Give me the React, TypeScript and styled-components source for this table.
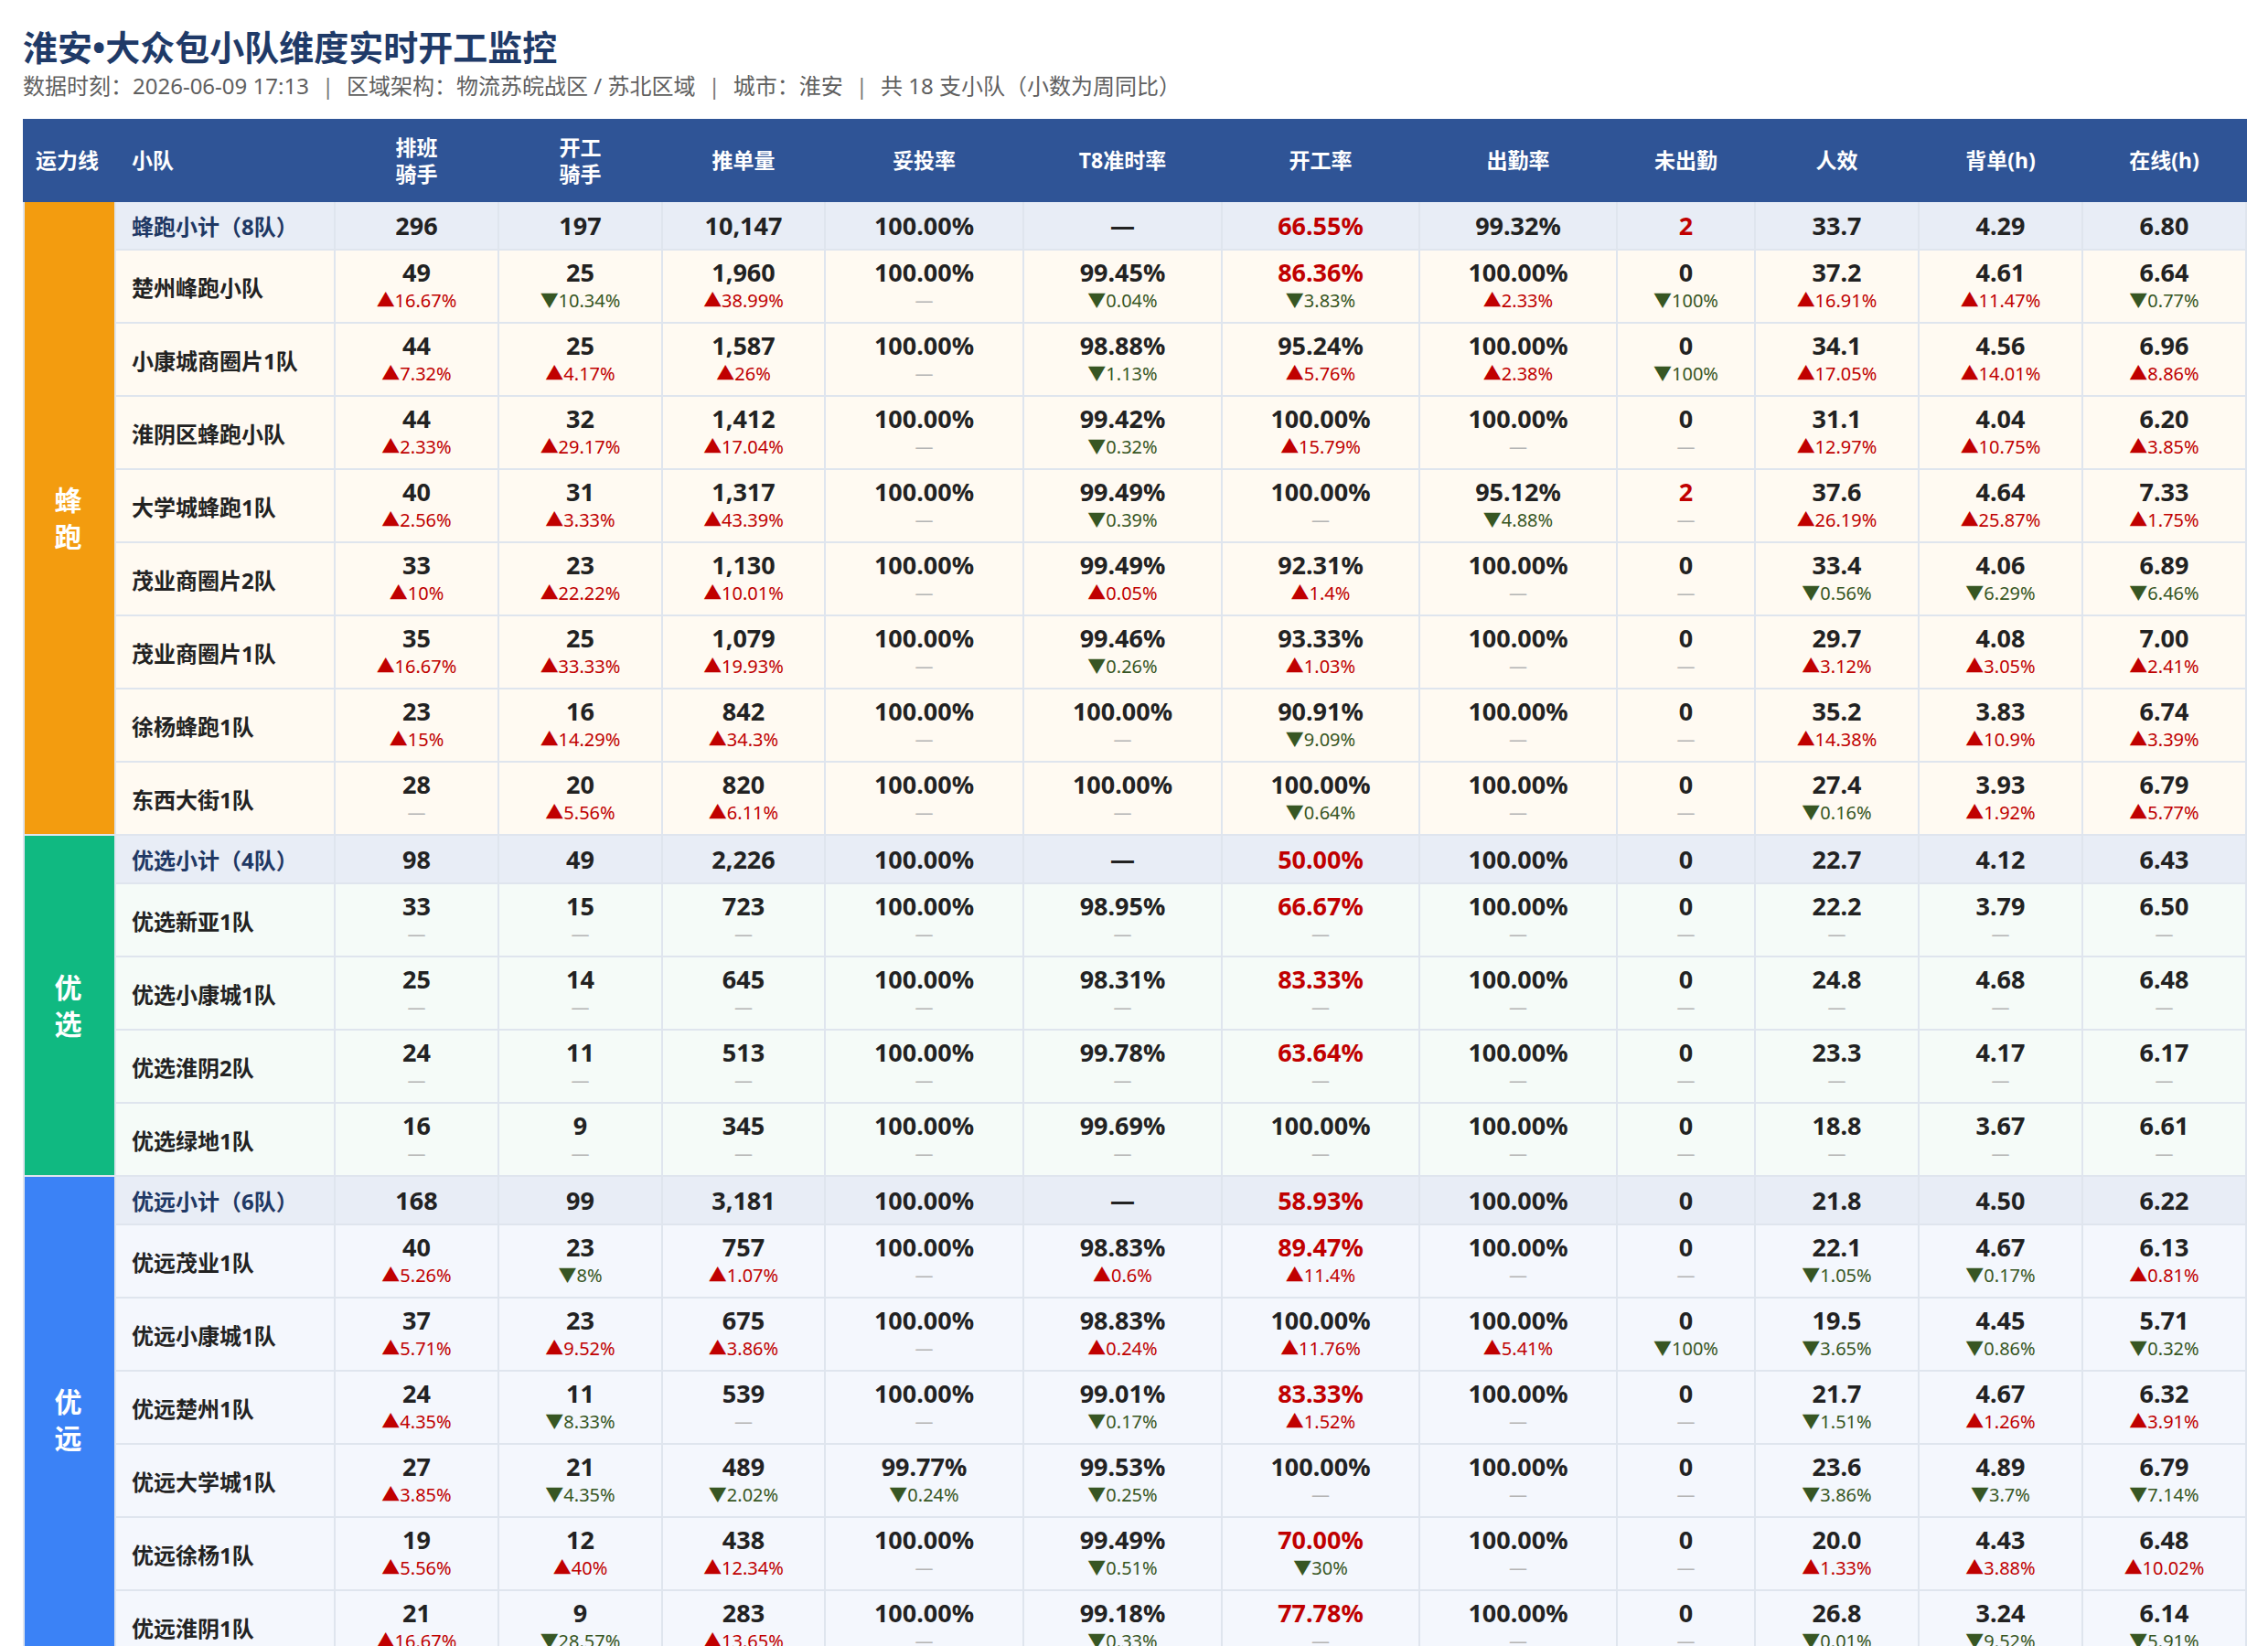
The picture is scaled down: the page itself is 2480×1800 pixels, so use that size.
import React from 'react';
import styled, { createGlobalStyle } from 'styled-components';

const GlobalStyle = createGlobalStyle`
    html, body {
        margin: 0;
        padding: 0;
        background: #ffffff;
    }
    body {
        font-family: "Noto Sans", "Noto Sans CJK SC", sans-serif;
        color: #222222;
    }
`;

type Tone = 'fengpao' | 'youxuan' | 'youyuan';

interface Column {
    label: string[];
    width: number;
    alert?: (value: string) => boolean;
}

const columns: Column[] = [
    { label: ['排班', '骑手'], width: 179 },
    { label: ['开工', '骑手'], width: 179 },
    { label: ['推单量'], width: 178 },
    { label: ['妥投率'], width: 217 },
    { label: ['T8准时率'], width: 217 },
    { label: ['开工率'], width: 216, alert: (v) => parseFloat(v) < 90 },
    { label: ['出勤率'], width: 216 },
    { label: ['未出勤'], width: 151, alert: (v) => parseFloat(v) > 0 },
    { label: ['人效'], width: 179 },
    { label: ['背单(h)'], width: 179 },
    { label: ['在线(h)'], width: 179 },
];

interface Group {
    label: string;
    tone: Tone;
    summary: string[];
    rows: string[][];
}

const groups: Group[] = [
    {
        label: '蜂跑',
        tone: 'fengpao',
        summary: ['蜂跑小计（8队）', '296', '197', '10,147', '100.00%', '—', '66.55%', '99.32%', '2', '33.7', '4.29', '6.80'],
        rows: [
            ['楚州峰跑小队', '49 ▲16.67%', '25 ▼10.34%', '1,960 ▲38.99%', '100.00%', '99.45% ▼0.04%', '86.36% ▼3.83%', '100.00% ▲2.33%', '0 ▼100%', '37.2 ▲16.91%', '4.61 ▲11.47%', '6.64 ▼0.77%'],
            ['小康城商圈片1队', '44 ▲7.32%', '25 ▲4.17%', '1,587 ▲26%', '100.00%', '98.88% ▼1.13%', '95.24% ▲5.76%', '100.00% ▲2.38%', '0 ▼100%', '34.1 ▲17.05%', '4.56 ▲14.01%', '6.96 ▲8.86%'],
            ['淮阴区蜂跑小队', '44 ▲2.33%', '32 ▲29.17%', '1,412 ▲17.04%', '100.00%', '99.42% ▼0.32%', '100.00% ▲15.79%', '100.00%', '0', '31.1 ▲12.97%', '4.04 ▲10.75%', '6.20 ▲3.85%'],
            ['大学城蜂跑1队', '40 ▲2.56%', '31 ▲3.33%', '1,317 ▲43.39%', '100.00%', '99.49% ▼0.39%', '100.00%', '95.12% ▼4.88%', '2', '37.6 ▲26.19%', '4.64 ▲25.87%', '7.33 ▲1.75%'],
            ['茂业商圈片2队', '33 ▲10%', '23 ▲22.22%', '1,130 ▲10.01%', '100.00%', '99.49% ▲0.05%', '92.31% ▲1.4%', '100.00%', '0', '33.4 ▼0.56%', '4.06 ▼6.29%', '6.89 ▼6.46%'],
            ['茂业商圈片1队', '35 ▲16.67%', '25 ▲33.33%', '1,079 ▲19.93%', '100.00%', '99.46% ▼0.26%', '93.33% ▲1.03%', '100.00%', '0', '29.7 ▲3.12%', '4.08 ▲3.05%', '7.00 ▲2.41%'],
            ['徐杨蜂跑1队', '23 ▲15%', '16 ▲14.29%', '842 ▲34.3%', '100.00%', '100.00%', '90.91% ▼9.09%', '100.00%', '0', '35.2 ▲14.38%', '3.83 ▲10.9%', '6.74 ▲3.39%'],
            ['东西大街1队', '28', '20 ▲5.56%', '820 ▲6.11%', '100.00%', '100.00%', '100.00% ▼0.64%', '100.00%', '0', '27.4 ▼0.16%', '3.93 ▲1.92%', '6.79 ▲5.77%'],
        ],
    },
    {
        label: '优选',
        tone: 'youxuan',
        summary: ['优选小计（4队）', '98', '49', '2,226', '100.00%', '—', '50.00%', '100.00%', '0', '22.7', '4.12', '6.43'],
        rows: [
            ['优选新亚1队', '33', '15', '723', '100.00%', '98.95%', '66.67%', '100.00%', '0', '22.2', '3.79', '6.50'],
            ['优选小康城1队', '25', '14', '645', '100.00%', '98.31%', '83.33%', '100.00%', '0', '24.8', '4.68', '6.48'],
            ['优选淮阴2队', '24', '11', '513', '100.00%', '99.78%', '63.64%', '100.00%', '0', '23.3', '4.17', '6.17'],
            ['优选绿地1队', '16', '9', '345', '100.00%', '99.69%', '100.00%', '100.00%', '0', '18.8', '3.67', '6.61'],
        ],
    },
    {
        label: '优远',
        tone: 'youyuan',
        summary: ['优远小计（6队）', '168', '99', '3,181', '100.00%', '—', '58.93%', '100.00%', '0', '21.8', '4.50', '6.22'],
        rows: [
            ['优远茂业1队', '40 ▲5.26%', '23 ▼8%', '757 ▲1.07%', '100.00%', '98.83% ▲0.6%', '89.47% ▲11.4%', '100.00%', '0', '22.1 ▼1.05%', '4.67 ▼0.17%', '6.13 ▲0.81%'],
            ['优远小康城1队', '37 ▲5.71%', '23 ▲9.52%', '675 ▲3.86%', '100.00%', '98.83% ▲0.24%', '100.00% ▲11.76%', '100.00% ▲5.41%', '0 ▼100%', '19.5 ▼3.65%', '4.45 ▼0.86%', '5.71 ▼0.32%'],
            ['优远楚州1队', '24 ▲4.35%', '11 ▼8.33%', '539', '100.00%', '99.01% ▼0.17%', '83.33% ▲1.52%', '100.00%', '0', '21.7 ▼1.51%', '4.67 ▲1.26%', '6.32 ▲3.91%'],
            ['优远大学城1队', '27 ▲3.85%', '21 ▼4.35%', '489 ▼2.02%', '99.77% ▼0.24%', '99.53% ▼0.25%', '100.00%', '100.00%', '0', '23.6 ▼3.86%', '4.89 ▼3.7%', '6.79 ▼7.14%'],
            ['优远徐杨1队', '19 ▲5.56%', '12 ▲40%', '438 ▲12.34%', '100.00%', '99.49% ▼0.51%', '70.00% ▼30%', '100.00%', '0', '20.0 ▲1.33%', '4.43 ▲3.88%', '6.48 ▲10.02%'],
            ['优远淮阴1队', '21 ▲16.67%', '9 ▼28.57%', '283 ▲13.65%', '100.00%', '99.18% ▼0.33%', '77.78%', '100.00%', '0', '26.8 ▼0.01%', '3.24 ▼9.52%', '6.14 ▼5.91%'],
        ],
    },
];

const toneColor: Record<Tone, string> = {
    fengpao: '#f39c0f',
    youxuan: '#10b981',
    youyuan: '#3b82f6',
};

const toneRow: Record<Tone, string> = {
    fengpao: '#fffaf2',
    youxuan: '#f5fbf8',
    youyuan: '#f4f7fd',
};

const Page = styled.div`
    padding: 26px 25px 0 25px;
`;

const Title = styled.h1`
    margin: 0;
    font-size: 38px;
    line-height: 50px;
    font-weight: 700;
    color: #1f3a68;
`;

const Meta = styled.div`
    font-size: 24px;
    line-height: 36px;
    color: #5f5f5f;
`;

const Sep = styled.span`
    margin: 0 14px;
    color: #777777;
`;

const Table = styled.table`
    margin-top: 18px;
    width: 2430px;
    table-layout: fixed;
    border-collapse: collapse;
`;

const HeadCell = styled.th<{ $left?: boolean; $pad?: number }>`
    height: 87px;
    padding: 0 ${(p) => (p.$left ? `0 0 ${p.$pad}px` : '0')};
    background: #2f5496;
    border: 2px solid #2f5496;
    color: #ffffff;
    font-size: 23px;
    line-height: 29px;
    font-weight: 700;
    text-align: ${(p) => (p.$left ? 'left' : 'center')};
    vertical-align: middle;
`;

const Row = styled.tr<{ $bg: string; $summary?: boolean }>`
    height: ${(p) => (p.$summary ? '53px' : '80px')};
    background: ${(p) => p.$bg};
`;

const GroupCell = styled.td<{ $color: string }>`
    padding-right: 4px;
    background: ${(p) => p.$color};
    border: 2px solid #dfe5ee;
    color: #ffffff;
    font-size: 30px;
    line-height: 40px;
    font-weight: 700;
    text-align: center;
    vertical-align: middle;

    span {
        display: block;
    }
`;

const NameCell = styled.td<{ $summary?: boolean }>`
    padding: 0 0 0 17px;
    border: 2px solid #dfe5ee;
    font-size: 24px;
    font-weight: 700;
    color: ${(p) => (p.$summary ? '#1f3864' : '#222222')};
    vertical-align: middle;
    white-space: nowrap;
`;

const ValueCell = styled.td<{ $summary?: boolean }>`
    padding: ${(p) => (p.$summary ? '0' : '8px 0 0 0')};
    border: 2px solid #dfe5ee;
    text-align: center;
    vertical-align: ${(p) => (p.$summary ? 'middle' : 'top')};
`;

const Value = styled.div<{ $alert?: boolean }>`
    font-size: 27px;
    line-height: 32px;
    font-weight: 700;
    color: ${(p) => (p.$alert ? '#c00000' : '#222222')};
`;

const Delta = styled.div<{ $dir: 'up' | 'down' | 'none' }>`
    font-size: 20px;
    line-height: 30px;
    color: ${(p) => (p.$dir === 'up' ? '#c00000' : p.$dir === 'down' ? '#375623' : '#b4b4b4')};
`;

function DataCell({ text, column, summary }: { text: string; column: Column; summary?: boolean }) {
    const [value, delta] = text.split(' ');
    const alert = value !== '—' && column.alert ? column.alert(value) : false;
    const dir = delta ? (delta.startsWith('▲') ? 'up' : 'down') : 'none';
    return (
        <ValueCell $summary={summary}>
            <Value $alert={alert}>{value}</Value>
            {!summary && <Delta $dir={dir}>{delta || '—'}</Delta>}
        </ValueCell>
    );
}

export default function App() {
    return (
        <Page>
            <GlobalStyle />
            <Title>淮安•大众包小队维度实时开工监控</Title>
            <Meta>
                数据时刻：2026-06-09 17:13<Sep>|</Sep>区域架构：物流苏皖战区 / 苏北区域<Sep>|</Sep>城市：淮安<Sep>|</Sep>共 18 支小队（小数为周同比）
            </Meta>
            <Table>
                <colgroup>
                    <col style={{ width: 100 }} />
                    <col style={{ width: 240 }} />
                    {columns.map((c, i) => (
                        <col key={i} style={{ width: c.width }} />
                    ))}
                </colgroup>
                <thead>
                    <tr>
                        <HeadCell $left $pad={12}>运力线</HeadCell>
                        <HeadCell $left $pad={17}>小队</HeadCell>
                        {columns.map((c, i) => (
                            <HeadCell key={i}>
                                {c.label.map((l, j) => (
                                    <div key={j}>{l}</div>
                                ))}
                            </HeadCell>
                        ))}
                    </tr>
                </thead>
                <tbody>
                    {groups.map((g) => (
                        <React.Fragment key={g.tone}>
                            <Row $bg="#e8edf6" $summary>
                                <GroupCell $color={toneColor[g.tone]} rowSpan={g.rows.length + 1}>
                                    {g.label.split('').map((ch, i) => (
                                        <span key={i}>{ch}</span>
                                    ))}
                                </GroupCell>
                                <NameCell $summary>{g.summary[0]}</NameCell>
                                {g.summary.slice(1).map((v, i) => (
                                    <DataCell key={i} text={v} column={columns[i]} summary />
                                ))}
                            </Row>
                            {g.rows.map((r) => (
                                <Row key={r[0]} $bg={toneRow[g.tone]}>
                                    <NameCell>{r[0]}</NameCell>
                                    {r.slice(1).map((v, i) => (
                                        <DataCell key={i} text={v} column={columns[i]} />
                                    ))}
                                </Row>
                            ))}
                        </React.Fragment>
                    ))}
                </tbody>
            </Table>
        </Page>
    );
}
